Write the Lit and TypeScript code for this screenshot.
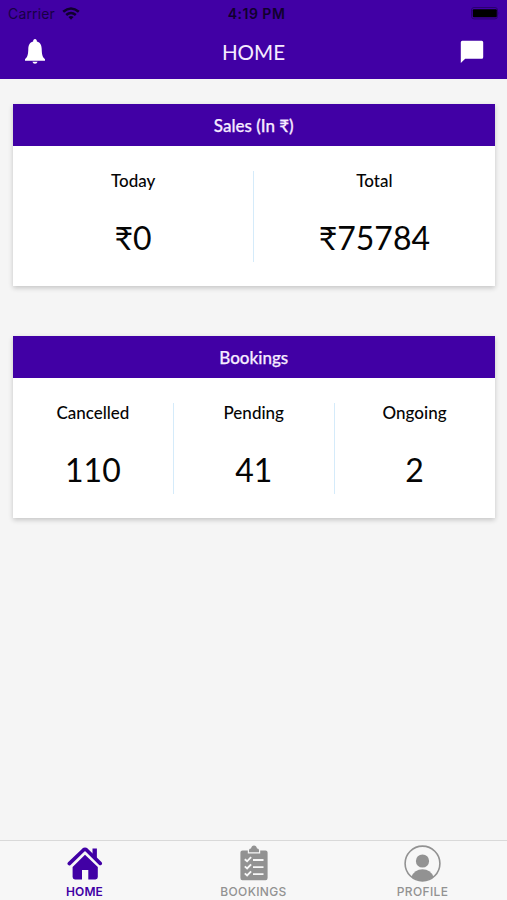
import { LitElement, html, css, svg } from "lit";
import { customElement, property } from "lit/decorators.js";

interface Stat { label: string; value: string; }

@customElement("stat-card")
class StatCard extends LitElement {
  @property() heading = "";
  @property({ attribute: false }) stats: Stat[] = [];

  static styles = css`
    :host { display: block; background: #fff; box-shadow: 0 2px 5px rgba(0, 0, 0, 0.2); }
    .heading { height: 42.6px; line-height: 43px; background: #4100a5; color: #f6ebff; text-align: center; font-size: 17px; font-weight: 500; -webkit-text-stroke: 0.25px #f6ebff; }
    .stats { display: flex; height: 91px; padding: 24.5px 0 24.7px; }
    .stat { flex: 1 1 0; text-align: center; box-sizing: border-box; border-right: 1px solid #d5ebfa; }
    .stat:last-child { border-right: 0; }
    .label { font-size: 17px; line-height: 20px; font-weight: 500; color: #050505; }
    .value { margin-top: 27px; font-size: 32px; line-height: 40px; color: #050505; }
  `;

  render() {
    return html`
      <div class="heading">${this.heading}</div>
      <div class="stats">
        ${this.stats.map((s) => html`<div class="stat"><div class="label">${s.label}</div><div class="value">${s.value}</div></div>`)}
      </div>`;
  }
}

const homeIcon = svg`<svg width="36" height="34" viewBox="0 0 36 34">
  <path d="M2.3 17.6 L16.2 4.2 Q18 2.6 19.8 4.2 L33.2 17.4" fill="none" stroke="#4100a5" stroke-width="3.6" stroke-linecap="round" stroke-linejoin="round"/>
  <path d="M25.5 2.5 h4.4 v10 l-4.4-4.2z" fill="#4100a5"/>
  <path d="M18 8.7 L30.8 21 V31 Q30.8 33.4 28.4 33.4 H21.3 V24 H15 V33.4 H8 Q5.6 33.4 5.6 31 V21z" fill="#4100a5"/></svg>`;

const bookingsIcon = svg`<svg width="28" height="36" viewBox="0 0 28 36">
  <path d="M2.5 5.5 H7.8 V8.5 H20.2 V5.5 H25.5 Q27.6 5.5 27.6 7.6 V33 Q27.6 35.2 25.5 35.2 H2.5 Q.4 35.2 .4 33 V7.6 Q.4 5.5 2.5 5.5z" fill="#929292"/>
  <path d="M9 7.2 V5.2 Q9 3.6 10.6 3.6 H11 Q11.6 .6 14 .6 T17 3.6 H17.4 Q19 3.6 19 5.2 V7.2z" fill="#929292"/>
  <path d="M4.8 14.3 l2.3 2 4-4.1 M4.8 21.4 l2.3 2 4-4.1 M4.8 28.4 l2.3 2 4-4.1 M13 15h10.5 M13 22.1h10.5 M13 29.1h10.5" fill="none" stroke="#f7f7f7" stroke-width="1.9"/></svg>`;

const profileIcon = svg`<svg width="37" height="37" viewBox="0 0 37 37">
  <clipPath id="disc"><circle cx="18.5" cy="18.5" r="17.3"/></clipPath>
  <circle cx="18.5" cy="18.5" r="17.4" fill="none" stroke="#929292" stroke-width="1.6"/>
  <circle cx="18.5" cy="16" r="6.6" fill="#929292"/>
  <path d="M7.4 37 V32 Q10.5 24.3 18.5 24.3 T29.6 32 V37z" fill="#929292" clip-path="url(#disc)"/></svg>`;

@customElement("app-root")
class AppRoot extends LitElement {
  static styles = css`
    :host { display: flex; flex-direction: column; height: 900px; background: #f5f5f5; font-family: Lato, sans-serif; overflow: hidden; }
    svg { display: block; }
    .top { height: 79px; flex: none; background: #4100a5; }
    .status { display: grid; grid-template-columns: 1fr auto 1fr; align-items: center; height: 27px; padding: 0 7px 0 8px; box-sizing: border-box; font: 14px/27px Inter, sans-serif; color: #180044; }
    .carrier { display: flex; align-items: center; gap: 7px; letter-spacing: 0.15px; }
    .time { font-size: 14px; font-weight: 600; letter-spacing: 0.5px; margin-left: 5px; color: #10002e; }
    .battery { justify-self: end; }
    .nav { display: grid; grid-template-columns: 1fr auto 1fr; align-items: center; height: 50px; padding: 0 23px; color: #fff; }
    .title { font-size: 20.6px; line-height: 50px; color: #f6ebff; }
    .chat { justify-self: end; }
    .content { flex: 1; padding: 24.6px 12.5px 0 13px; display: flex; flex-direction: column; gap: 49.2px; }
    .tabs { flex: none; height: 60px; box-sizing: border-box; border-top: 1px solid #d9d9d9; background: #f7f7f7; display: flex; }
    .tab { flex: 1; display: flex; flex-direction: column; align-items: center; font: 500 12px/14px Inter, sans-serif; letter-spacing: 0.35px; color: #929292; }
    .tab.active { color: #4100a5; font-weight: 600; letter-spacing: 0.1px; }
    .icon { height: 44px; display: flex; align-items: center; }
  `;

  render() {
    const tabs = [
      { name: "HOME", icon: homeIcon },
      { name: "BOOKINGS", icon: bookingsIcon },
      { name: "PROFILE", icon: profileIcon },
    ];
    return html`
      <header class="top">
        <div class="status">
          <div class="carrier"><span>Carrier</span>
            <svg width="18" height="13" viewBox="0 0 18 13"><g fill="none" stroke="#10002e" stroke-width="2.6"><path d="M1.2 4.7 Q9 -1.7 16.8 4.7"/><path d="M4.2 8 Q9 4 13.8 8"/></g><path d="M6.4 10 Q9 8 11.6 10 L9 12.7z" fill="#10002e"/></svg>
          </div>
          <div class="time">4:19 PM</div>
          <svg class="battery" width="29" height="13" viewBox="0 0 29 13"><rect x=".5" y=".5" width="26" height="11.4" rx="2.5" fill="none" stroke="#2b0070"/><rect x="1.8" y="2.2" width="24" height="8" rx="1" fill="#000"/><path d="M27.6 4.2 q1.4 2 0 4z" fill="#2b0070"/></svg>
        </div>
        <div class="nav">
          <svg width="24" height="26" viewBox="0 0 24 26"><path d="M12 0 C13.2 0 13.9 .9 13.9 2.4 C17.4 3.4 18.6 6.2 18.7 10 C18.8 15.3 19.4 18 22 20.2 V21.8 H2 V20.2 C4.6 18 5.2 15.3 5.3 10 C5.4 6.2 6.6 3.4 10.1 2.4 C10.1 .9 10.8 0 12 0z M9.4 22.8 H14.6 Q14 24.8 12 24.8 T9.4 22.8z" fill="#fff"/></svg>
          <div class="title">HOME</div>
          <svg class="chat" width="24" height="24" viewBox="0 0 24 24"><path d="M2.3 .8 H21.7 Q23.2 .8 23.2 2.3 V17.2 Q23.2 18.7 21.7 18.7 H5.2 L.8 23 V2.3 Q.8 .8 2.3 .8z" fill="#fff"/></svg>
        </div>
      </header>
      <main class="content">
        <stat-card heading="Sales (In ₹)" .stats=${[{ label: "Today", value: "₹0" }, { label: "Total", value: "₹75784" }]}></stat-card>
        <stat-card heading="Bookings" .stats=${[{ label: "Cancelled", value: "110" }, { label: "Pending", value: "41" }, { label: "Ongoing", value: "2" }]}></stat-card>
      </main>
      <nav class="tabs">
        ${tabs.map((t, i) => html`<div class="tab ${i === 0 ? "active" : ""}"><div class="icon">${t.icon}</div><span>${t.name}</span></div>`)}
      </nav>`;
  }
}
